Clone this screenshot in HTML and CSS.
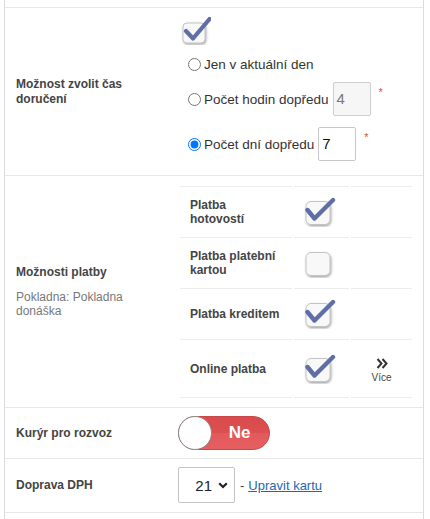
FILE: index.html
```html
<!DOCTYPE html>
<html lang="cs">
<head>
<meta charset="utf-8">
<title>Nastavení dopravy</title>
<link rel="stylesheet" href="styles.css">
</head>
<body>
<div class="wrap">
  <div class="spacer"></div>

  <div class="row row-time">
    <div class="label"><span class="label-text">Možnost zvolit čas doručení</span></div>
    <div class="value">
      <svg class="cb cb-top" width="30" height="28" viewBox="0 0 30 28">
        <defs>
          <filter id="sh1" x="-30%" y="-30%" width="160%" height="160%">
            <feDropShadow dx="0.8" dy="1.2" stdDeviation="0.9" flood-color="#555" flood-opacity="0.55"/>
          </filter>
        </defs>
        <rect x="2" y="6" width="22" height="20" rx="4" fill="#f8f8f8" stroke="#c4c4c4" stroke-width="1" filter="url(#sh1)"/>
        <path d="M5 14 L12 21.5 L28.5 2" fill="none" stroke="#5f6fa6" stroke-width="4.2" stroke-linecap="round" stroke-linejoin="round"/>
      </svg>
      <label class="opt opt1"><input type="radio" name="t"><span>Jen v aktuální den</span></label>
      <label class="opt opt2"><input type="radio" name="t"><span>Počet hodin dopředu</span><span class="num disabled">4</span><span class="req">*</span></label>
      <label class="opt opt3"><input type="radio" name="t" checked><span>Počet dní dopředu</span><span class="num">7</span><span class="req">*</span></label>
    </div>
  </div>

  <div class="row row-pay">
    <div class="label">
      <div class="label-text">Možnosti platby</div>
      <div class="sub">Pokladna: Pokladna donáška</div>
    </div>
    <div class="value">
      <div class="pay">
        <div class="pc name"><span>Platba hotovostí</span></div>
        <div class="pc chk"><svg class="cb" width="32" height="30" viewBox="0 0 32 30"><defs><filter id="sh2" x="-30%" y="-30%" width="160%" height="160%"><feDropShadow dx="0.8" dy="1.3" stdDeviation="0.9" flood-color="#555" flood-opacity="0.55"/></filter></defs><rect x="2" y="4.5" width="24" height="23" rx="5" fill="#f8f8f8" stroke="#c4c4c4" stroke-width="1" filter="url(#sh2)"/><path d="M3.5 13 L10.5 21.5 L29 3" fill="none" stroke="#5f6fa6" stroke-width="4.4" stroke-linecap="round" stroke-linejoin="round"/></svg></div>
        <div class="pc"></div>

        <div class="pc name"><span>Platba platební kartou</span></div>
        <div class="pc chk"><svg class="cb" width="32" height="30" viewBox="0 0 32 30"><rect x="2" y="4.5" width="24" height="23" rx="5" fill="#f8f8f8" stroke="#c4c4c4" stroke-width="1" filter="url(#sh2)"/></svg></div>
        <div class="pc"></div>

        <div class="pc name"><span>Platba kreditem</span></div>
        <div class="pc chk"><svg class="cb" width="32" height="30" viewBox="0 0 32 30"><rect x="2" y="4.5" width="24" height="23" rx="5" fill="#f8f8f8" stroke="#c4c4c4" stroke-width="1" filter="url(#sh2)"/><path d="M3.5 13 L10.5 21.5 L29 3" fill="none" stroke="#5f6fa6" stroke-width="4.4" stroke-linecap="round" stroke-linejoin="round"/></svg></div>
        <div class="pc"></div>

        <div class="pc name last"><span>Online platba</span></div>
        <div class="pc chk last"><svg class="cb" width="32" height="30" viewBox="0 0 32 30"><rect x="2" y="4.5" width="24" height="23" rx="5" fill="#f8f8f8" stroke="#c4c4c4" stroke-width="1" filter="url(#sh2)"/><path d="M3.5 13 L10.5 21.5 L29 3" fill="none" stroke="#5f6fa6" stroke-width="4.4" stroke-linecap="round" stroke-linejoin="round"/></svg></div>
        <div class="pc more last">
          <svg width="12" height="11" viewBox="0 0 12 11"><path d="M1.5 1 L5.5 5.5 L1.5 10 M6.5 1 L10.5 5.5 L6.5 10" fill="none" stroke="#333" stroke-width="2"/></svg>
          <span>Více</span>
        </div>
      </div>
    </div>
  </div>

  <div class="row row-courier">
    <div class="label"><span class="label-text">Kurýr pro rozvoz</span></div>
    <div class="value">
      <div class="toggle"><span class="knob"></span><span class="tg-text">Ne</span></div>
    </div>
  </div>

  <div class="row row-vat">
    <div class="label"><span class="label-text">Doprava DPH</span></div>
    <div class="value vat">
      <div class="select"><span>21</span><svg width="10" height="7" viewBox="0 0 10 7"><path d="M1.2 1.2 L5 5 L8.8 1.2" fill="none" stroke="#222" stroke-width="2.2"/></svg></div>
      <span class="dash">-</span>
      <a href="#" class="link">Upravit kartu</a>
    </div>
  </div>

  <div class="row row-end"></div>
</div>
</body>
</html>
```
FILE: styles.css
```css
* { box-sizing: border-box; }
html, body { margin: 0; padding: 0; background: #fff; }
body {
  font-family: "Liberation Sans", Arial, sans-serif;
  color: #444;
  height: 519px;
  overflow: hidden;
}
.wrap {
  margin-left: 4px;
  width: 420px;
  min-height: 519px;
  border-left: 1px solid #dcdcdc;
  border-right: 1px solid #dcdcdc;
}
.spacer { height: 7px; }
.row {
  display: grid;
  grid-template-columns: 173px 1fr;
  border-top: 1px solid #e8e8e8;
}
.label {
  padding-left: 11px;
  align-self: center;
  font-size: 12px;
  line-height: 15px;
}
.label-text { font-weight: bold; color: #444; display: block; max-width: 120px; }
.row-pay .label-text, .row-courier .label-text, .row-vat .label-text { max-width: none; }
.sub { color: #777; margin-top: 10px; line-height: 14px; max-width: 120px; }

/* row 1 */
.row-time .value {
  padding: 9px 0 14px 0;
  display: flex;
  flex-direction: column;
  align-items: flex-start;
}
.cb { display: block; }
.cb-top { margin-left: 3px; }
.opt {
  display: flex;
  align-items: center;
  font-size: 13.5px;
  color: #333;
  margin-left: 10px;
}
.opt input { margin: 0 3px 0 0; width: 13px; height: 13px; }
.opt1 { height: 20px; margin-top: 9px; }
.opt2 { margin-top: 8px; }
.opt3 { margin-top: 11px; }
.num {
  width: 38px;
  height: 34px;
  border: 1px solid #c8c8c8;
  border-radius: 2px;
  margin-left: 4px;
  font-size: 15px;
  line-height: 32px;
  padding-left: 3px;
  color: #111;
  background: #fff;
}
.num.disabled { background: #f6f6f6; color: #777; border-color: #cfcfcf; }
.req {
  align-self: flex-start;
  color: #e04848;
  font-size: 11px;
  margin-left: 8px;
  margin-top: 4px;
}

/* row 2 */
.row-pay .value { padding: 10px 0 9px 2px; }
.pay {
  display: grid;
  grid-template-columns: 112px 55px 61px;
  column-gap: 2px;
  width: 232px;
}
.pc {
  border-top: 1px solid #ececec;
  height: 51px;
  display: flex;
  align-items: center;
}
.pay > .pc:nth-last-child(-n+3) { height: 59px; border-bottom: 1px solid #ececec; }
.name {
  padding-left: 10px;
  font-size: 12px;
  font-weight: bold;
  line-height: 14px;
  color: #444;
}
.name span { display: block; max-width: 91px; }
.chk { padding-left: 10px; }
.more {
  flex-direction: column;
  justify-content: center;
  align-items: center;
  padding-top: 4px;
}
.more span { font-size: 10px; color: #444; margin-top: 3px; }

/* row 3 */
.row-courier .value { padding: 8px 0 8px 0; }
.toggle {
  width: 92px;
  height: 34px;
  border-radius: 17px;
  background: linear-gradient(#d94b4d 0%, #dc5052 50%, #e35a5c 51%, #e55e60 100%);
  border: 1px solid #c9494b;
  display: flex;
  align-items: center;
}
.knob {
  width: 34px;
  height: 34px;
  border-radius: 50%;
  background: #fff;
  border: 1px solid #8a8a8a;
  margin-left: -1px;
  flex: none;
}
.tg-text {
  flex: 1;
  text-align: center;
  color: #fff;
  font-weight: bold;
  font-size: 17px;
  padding-right: 2px;
}

/* row 4 */
.vat { display: flex; align-items: center; padding: 8px 0 9px 0; }
.select {
  width: 57px;
  height: 36px;
  border: 1px solid #c4c4c4;
  border-radius: 2px;
  display: flex;
  align-items: center;
  justify-content: flex-end;
  padding-right: 6px;
  gap: 6px;
  font-size: 15px;
  color: #222;
}
.dash { font-size: 13px; color: #444; margin-left: 5px; }
.link {
  font-size: 13px;
  color: #1f68b1;
  text-decoration: underline;
  margin-left: 4px;
}
.row-end { height: 8px; }
```
